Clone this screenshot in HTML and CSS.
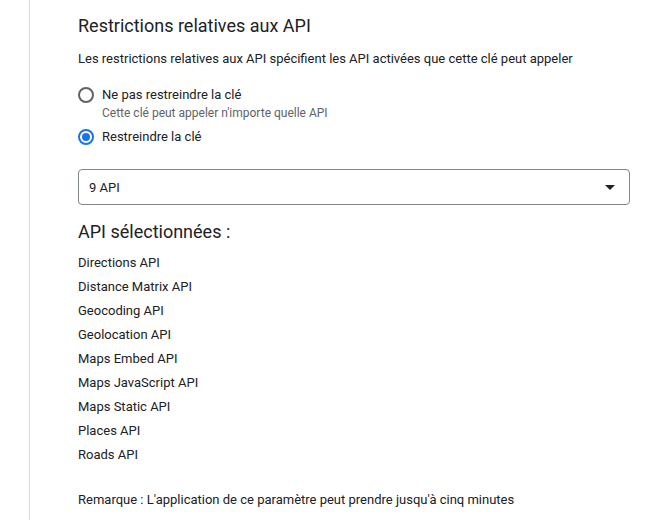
FILE: index.html
```html
<!DOCTYPE html>
<html lang="fr">
<head>
<meta charset="utf-8">
<link rel="stylesheet" href="styles.css">
</head>
<body>
<div class="page">
  <div class="rail"></div>
  <main class="content">
    <h2 class="title">Restrictions relatives aux API</h2>
    <p class="desc">Les restrictions relatives aux API spécifient les API activées que cette clé peut appeler</p>
    <div class="radios">
      <label class="radio">
        <span class="dot"></span>
        <span class="rtext">
          <span class="rlabel">Ne pas restreindre la clé</span>
          <span class="rsub">Cette clé peut appeler n'importe quelle API</span>
        </span>
      </label>
      <label class="radio">
        <span class="dot checked"></span>
        <span class="rtext">
          <span class="rlabel">Restreindre la clé</span>
        </span>
      </label>
    </div>
    <div class="select">
      <span class="selval">9 API</span>
      <span class="caret"></span>
    </div>
    <h3 class="subtitle">API sélectionnées :</h3>
    <ul class="apis">
      <li>Directions API</li>
      <li>Distance Matrix API</li>
      <li>Geocoding API</li>
      <li>Geolocation API</li>
      <li>Maps Embed API</li>
      <li>Maps JavaScript API</li>
      <li>Maps Static API</li>
      <li>Places API</li>
      <li>Roads API</li>
    </ul>
    <p class="note">Remarque : L'application de ce paramètre peut prendre jusqu'à cinq minutes</p>
  </main>
</div>
</body>
</html>
```

FILE: styles.css
```css
* { box-sizing: border-box; }
html, body { margin: 0; padding: 0; background: #fff; }
body {
  font-family: Roboto, "Liberation Sans", Arial, sans-serif;
  color: #202124;
  width: 671px;
  height: 520px;
  overflow: hidden;
}
.page {
  display: flex;
  height: 520px;
}
.rail {
  width: 30px;
  flex: none;
  border-right: 1px solid #dadce0;
}
.content {
  padding-left: 48px;
  width: 600px;
}
.title {
  margin: 14px 0 0;
  font-size: 18px;
  font-weight: 400;
  line-height: 24px;
}
.desc {
  margin: 11px 0 0;
  font-size: 13px;
  line-height: 20px;
}
.radios {
  margin-top: 16px;
  display: flex;
  flex-direction: column;
  gap: 6px;
}
.radio {
  display: flex;
  align-items: flex-start;
  gap: 8px;
}
.dot {
  width: 16px;
  height: 16px;
  margin-top: 2px;
  border: 2px solid #5f6368;
  border-radius: 50%;
  flex: none;
  position: relative;
}
.dot.checked { border-color: #1a73e8; }
.dot.checked::after {
  content: "";
  position: absolute;
  left: 2px; top: 2px;
  width: 8px; height: 8px;
  border-radius: 50%;
  background: #1a73e8;
}
.rtext { display: flex; flex-direction: column; }
.rlabel { font-size: 13px; line-height: 20px; }
.rsub { font-size: 12px; line-height: 16px; color: #5f6368; }
.select {
  margin-top: 22px;
  width: 552px;
  height: 36px;
  border: 1px solid #80868b;
  border-radius: 4px;
  display: flex;
  align-items: center;
  justify-content: space-between;
  padding: 0 14px 0 10px;
}
.selval { font-size: 13px; }
.caret {
  width: 0; height: 0;
  border-left: 5px solid transparent;
  border-right: 5px solid transparent;
  border-top: 5px solid #202124;
}
.subtitle {
  margin: 15px 0 0;
  font-size: 18px;
  font-weight: 400;
  line-height: 24px;
}
.apis {
  list-style: none;
  margin: 7px 0 0;
  padding: 0;
}
.apis li {
  font-size: 13px;
  line-height: 24px;
}
.note {
  margin: 23px 0 0;
  font-size: 13px;
  line-height: 20px;
}
```
